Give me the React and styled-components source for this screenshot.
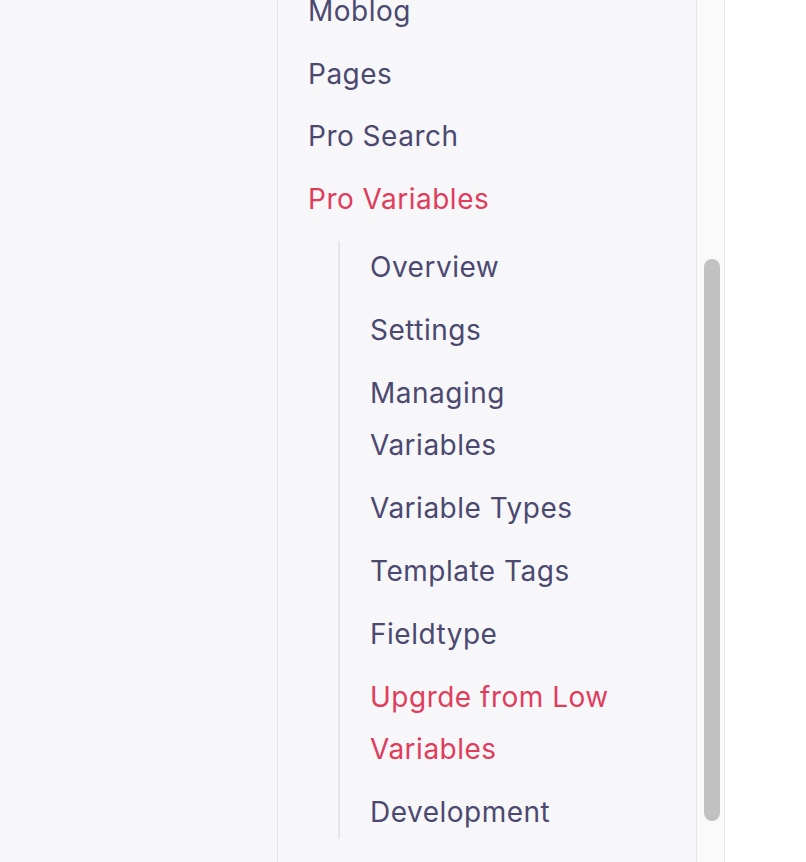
import React from 'react';
import styled, { createGlobalStyle } from 'styled-components';

const GlobalStyle = createGlobalStyle`
  html, body {
    margin: 0;
    padding: 0;
    background: #ffffff;
  }
  body {
    font-family: Inter, "Noto Sans", sans-serif;
  }
`;

const Page = styled.div`
  display: flex;
  height: 862px;
  overflow: hidden;
  background: #ffffff;
`;

const Gutter = styled.div`
  width: 277px;
  flex-shrink: 0;
  background: #f7f7fa;
  border-right: 1px solid #e3e6ee;
`;

const Sidebar = styled.nav`
  width: 419px;
  flex-shrink: 0;
  box-sizing: border-box;
  padding: 0 30px;
  background: #f7f7fa;
  border-right: 1px solid #e6e6e9;
  overflow: hidden;
`;

const Menu = styled.ul`
  list-style: none;
  margin: -15px 0 0 0;
  padding: 0;
`;

const SubMenu = styled.ul`
  list-style: none;
  margin: 16px 42px 0 30px;
  padding: 0 0 0 30px;
  border-left: 2px solid #e3e6ee;
`;

const Item = styled.li`
  margin: 0 0 ${p => (p.$nested ? '10.4px' : '10px')} 0;
  &:last-child {
    margin-bottom: 0;
  }
`;

const Link = styled.a`
  display: block;
  font-size: 28px;
  line-height: 52.5px;
  color: ${p => (p.$active ? '#e03d5c' : '#4b4970')};
  text-decoration: none;
  letter-spacing: 0.5px;
`;

const Track = styled.div`
  width: 27px;
  flex-shrink: 0;
  background: #fafafa;
  border-right: 1px solid #e8e8e8;
  display: flex;
  justify-content: center;
`;

const Thumb = styled.div`
  width: 16px;
  height: 562px;
  margin-top: 259px;
  margin-left: 2px;
  border-radius: 8px;
  background: #c1c1c1;
`;

const topItems = ['Moblog', 'Pages', 'Pro Search'];

const subItems = [
  { label: 'Overview' },
  { label: 'Settings' },
  { label: 'Managing Variables' },
  { label: 'Variable Types' },
  { label: 'Template Tags' },
  { label: 'Fieldtype' },
  { label: 'Upgrde from Low Variables', active: true },
  { label: 'Development' },
];

export default function App() {
  return (
    <>
      <GlobalStyle />
      <Page>
        <Gutter />
        <Sidebar>
          <Menu>
            {topItems.map(label => (
              <Item key={label}>
                <Link href="#">{label}</Link>
              </Item>
            ))}
            <Item>
              <Link href="#" $active>Pro Variables</Link>
              <SubMenu>
                {subItems.map(item => (
                  <Item key={item.label} $nested>
                    <Link href="#" $active={item.active}>{item.label}</Link>
                  </Item>
                ))}
              </SubMenu>
            </Item>
          </Menu>
        </Sidebar>
        <Track>
          <Thumb />
        </Track>
      </Page>
    </>
  );
}
